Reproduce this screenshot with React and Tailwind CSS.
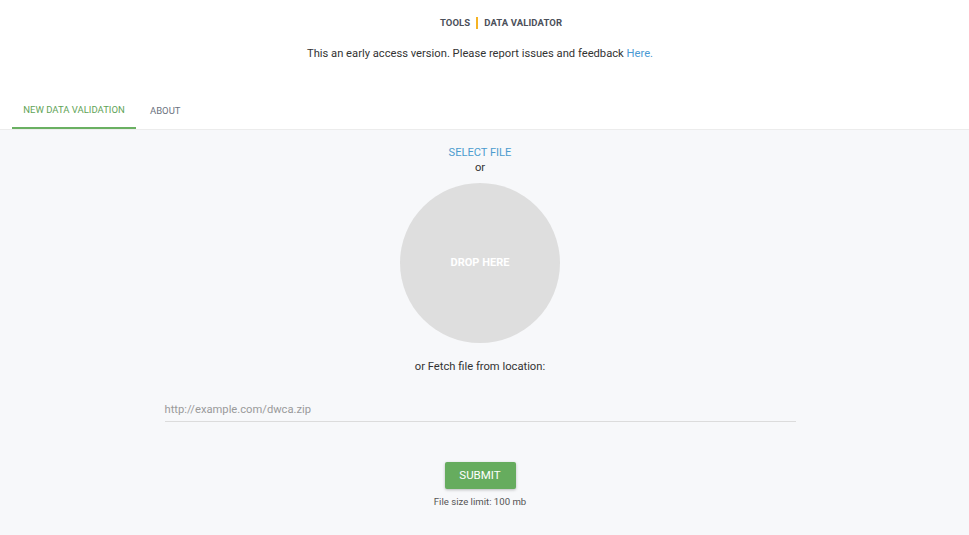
export default function App() {
  return (
    <div className="min-h-[535px] flex flex-col bg-white text-[#333]" style={{ fontFamily: "Roboto, 'Liberation Sans', sans-serif" }}>
      <header className="pt-[17px] flex justify-center pl-[33px]">
        <div className="flex items-center text-[9.5px] font-bold text-[#4b505a] tracking-[0.1px] leading-[12px]">
          <span>TOOLS</span>
          <span className="mx-[6px] w-[2px] h-[12px] bg-[#f5b324]"></span>
          <span>DATA VALIDATOR</span>
        </div>
      </header>
      <div className="w-[960px] text-center text-[11.2px] mt-[17px] leading-[16px] text-[#333]">
        This an early access version. Please report issues and feedback <a className="text-[#4a9ad4]">Here.</a>
      </div>
      <nav className="mt-[31px] flex px-[12px] border-b border-[#ececec]">
        <div className="w-[124px] h-[36px] flex items-center justify-center text-[9.5px] text-[#5fa457] border-b-2 border-[#6ab062] mb-[-1px]">NEW DATA VALIDATION</div>
        <div className="px-[14px] h-[36px] flex items-center justify-center text-[9.5px] text-[#6b7280]">ABOUT</div>
      </nav>
      <main className="flex-1 bg-[#f7f8fa]">
        <div className="w-[960px] flex flex-col items-center pt-[16px]">
          <div className="text-[11.1px] leading-[14px] text-[#4b9ccf]">SELECT FILE</div>
          <div className="text-[11.2px] leading-[14px] mt-[1px] text-[#333]">or</div>
          <div className="mt-[8px] w-[160px] h-[160px] rounded-full bg-[#dedede] flex items-center justify-center text-white text-[11px] font-bold">DROP HERE</div>
          <div className="mt-[17px] text-[11.2px] leading-[14px] text-[#333]">or Fetch file from location:</div>
          <div className="mt-[29px] w-[631px] border-b border-[#dcdcdc] pb-[4px] text-[11.2px] leading-[14px] text-[#9a9a9a]">http://example.com/dwca.zip</div>
          <button className="mt-[40px] w-[71px] h-[27px] rounded-[2px] bg-[#66ac5e] text-white text-[11.5px] shadow-[0_1px_3px_rgba(0,0,0,0.25)]">SUBMIT</button>
          <div className="mt-[7px] text-[9.6px] leading-[11px] text-[#555]">File size limit: 100 mb</div>
        </div>
      </main>
    </div>
  );
}
